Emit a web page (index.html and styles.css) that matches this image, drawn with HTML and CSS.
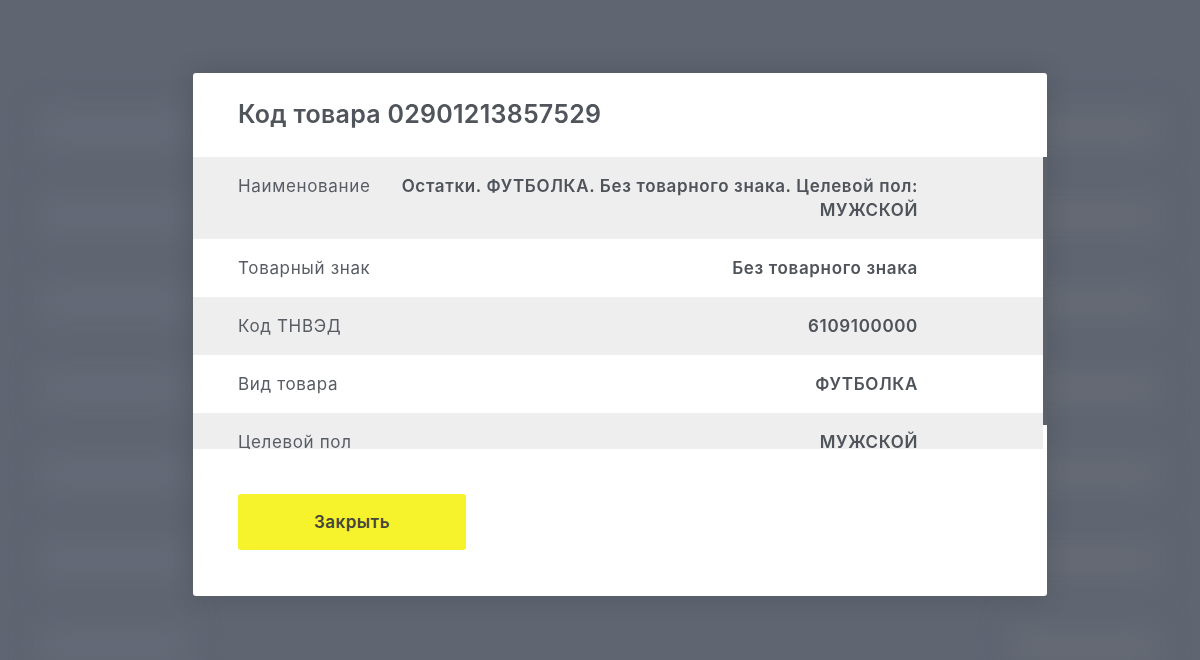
FILE: index.html
```html
<!DOCTYPE html>
<html lang="ru">
<head>
<meta charset="utf-8">
<title>Код товара</title>
<link rel="stylesheet" href="styles.css">
</head>
<body>
<div class="backdrop">
  <div class="bg-page">
    <div class="bg-row"><span class="bg-a"></span><span class="bg-b"></span></div>
    <div class="bg-row"><span class="bg-a"></span><span class="bg-b"></span></div>
    <div class="bg-row"><span class="bg-a"></span><span class="bg-b"></span></div>
    <div class="bg-row"><span class="bg-a"></span><span class="bg-b"></span></div>
    <div class="bg-row"><span class="bg-a"></span><span class="bg-b"></span></div>
    <div class="bg-row"><span class="bg-a"></span><span class="bg-b"></span></div>
    <div class="bg-row"><span class="bg-a"></span><span class="bg-b"></span></div>
  </div>
</div>
<div class="overlay">
  <div class="modal">
    <h1 class="modal-title">Код товара 02901213857529</h1>
    <div class="scroll">
      <div class="rows">
        <div class="row grey">
          <div class="label">Наименование</div>
          <div class="value">Остатки. ФУТБОЛКА. Без товарного знака. Целевой пол: МУЖСКОЙ</div>
        </div>
        <div class="row">
          <div class="label">Товарный знак</div>
          <div class="value">Без товарного знака</div>
        </div>
        <div class="row grey">
          <div class="label">Код ТНВЭД</div>
          <div class="value">6109100000</div>
        </div>
        <div class="row">
          <div class="label">Вид товара</div>
          <div class="value">ФУТБОЛКА</div>
        </div>
        <div class="row grey">
          <div class="label">Целевой пол</div>
          <div class="value">МУЖСКОЙ</div>
        </div>
      </div>
      <div class="thumb"></div>
    </div>
    <div class="actions">
      <button class="btn">Закрыть</button>
    </div>
  </div>
</div>
</body>
</html>
```
FILE: styles.css
```css
* { box-sizing: border-box; }
html, body { margin: 0; height: 100%; }
body {
  font-family: Inter, "Noto Sans", "Liberation Sans", sans-serif;
  background: #5f6571;
  overflow: hidden;
}
.backdrop {
  height: 100%;
  overflow: hidden;
}
.bg-page {
  filter: blur(14px);
  padding: 110px 40px 0;
  display: flex;
  flex-direction: column;
  gap: 46px;
}
.bg-row {
  display: flex;
  justify-content: space-between;
  height: 40px;
}
.bg-a { width: 150px; background: #646a76; }
.bg-b { width: 150px; background: #656a74; }
.overlay {
  position: fixed;
  inset: 0;
  display: flex;
  align-items: flex-start;
  justify-content: center;
  padding-top: 73px;
}
.modal {
  width: 854px;
  height: 523px;
  background: #fff;
  border-radius: 3px;
  display: flex;
  flex-direction: column;
  margin-left: 40px;
  box-shadow: 0 0 24px rgba(40, 44, 52, 0.22);
}
.modal-title {
  margin: 0;
  padding: 25px 45px 27px;
  font-size: 25px;
  line-height: 32px;
  font-weight: 600;
  color: #50555c;
  letter-spacing: 0.25px;
}
.scroll {
  height: 292px;
  overflow: hidden;
  display: flex;
}
.rows {
  flex: 1;
}
.thumb {
  width: 4px;
  height: 268px;
  background: #5c616b;
  flex: none;
}
.row {
  display: flex;
  justify-content: space-between;
  gap: 24px;
  padding: 17px 125px 17px 45px;
  font-size: 17px;
  line-height: 24px;
  letter-spacing: 0.65px;
}
.row.grey { background: #eeeeee; }
.label {
  color: #585d64;
  flex: none;
  white-space: nowrap;
}
.value {
  color: #4f545a;
  font-weight: 600;
  text-align: right;
  width: 520px;
}
.actions {
  padding: 45px 45px 0;
}
.btn {
  width: 228px;
  height: 56px;
  border: 0;
  border-radius: 3px;
  background: #f6f22c;
  color: #45463a;
  font-family: inherit;
  font-size: 17px;
  letter-spacing: 0.5px;
  font-weight: 600;
}
```
